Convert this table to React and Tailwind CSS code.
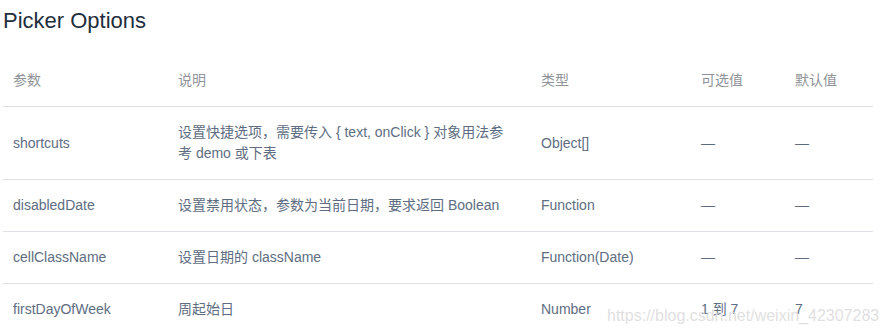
import React from 'react';

const rows = [
  { name: 'shortcuts', desc: '设置快捷选项，需要传入 { text, onClick } 对象用法参考 demo 或下表', type: 'Object[]', opts: '—', def: '—' },
  { name: 'disabledDate', desc: '设置禁用状态，参数为当前日期，要求返回 Boolean', type: 'Function', opts: '—', def: '—' },
  { name: 'cellClassName', desc: '设置日期的 className', type: 'Function(Date)', opts: '—', def: '—' },
  { name: 'firstDayOfWeek', desc: '周起始日', type: 'Number', opts: '1 到 7', def: '7' },
];

function App() {
  return (
    <div
      className="relative h-[334px] w-[889px] overflow-hidden bg-white px-[3px] pt-[4px]"
      style={{ fontFamily: '"Liberation Sans", "Noto Sans CJK SC", sans-serif' }}
    >
      {/* Title */}
      <h3 className="text-[22px] font-normal leading-[33px] text-[#1f2f3d]">Picker Options</h3>

      {/* Table */}
      <table className="mt-[18px] w-[870px] table-fixed border-collapse text-[14px] leading-[21px]">
        <colgroup>
          <col className="w-[165px]" />
          <col className="w-[363px]" />
          <col className="w-[160px]" />
          <col className="w-[94px]" />
          <col className="w-[88px]" />
        </colgroup>
        <thead>
          <tr className="border-b border-[#dcdfe6] text-left text-[#909399]">
            <th className="py-[15px] pl-[10px] font-normal">参数</th>
            <th className="py-[15px] pl-[10px] font-normal">说明</th>
            <th className="py-[15px] pl-[10px] font-normal">类型</th>
            <th className="py-[15px] pl-[10px] font-normal">可选值</th>
            <th className="py-[15px] pl-[10px] font-normal">默认值</th>
          </tr>
        </thead>
        <tbody className="text-[#5e6d82]">
          {rows.map((r) => (
            <tr key={r.name} className="border-b border-[#dcdfe6]">
              <td className="py-[15px] pl-[10px] align-middle">{r.name}</td>
              <td className="py-[15px] pl-[10px] pr-[24px] align-middle">{r.desc}</td>
              <td className="py-[15px] pl-[10px] align-middle">{r.type}</td>
              <td className="py-[15px] pl-[10px] align-middle">{r.opts}</td>
              <td className="py-[15px] pl-[10px] align-middle">{r.def}</td>
            </tr>
          ))}
        </tbody>
      </table>

      {/* Watermark */}
      <div className="pointer-events-none absolute left-[607px] top-[304px] whitespace-nowrap text-[16px] leading-[24px] text-[#dcdcdc]/90">
        https://blog.csdn.net/weixin_42307283
      </div>
    </div>
  );
}

export default App;
